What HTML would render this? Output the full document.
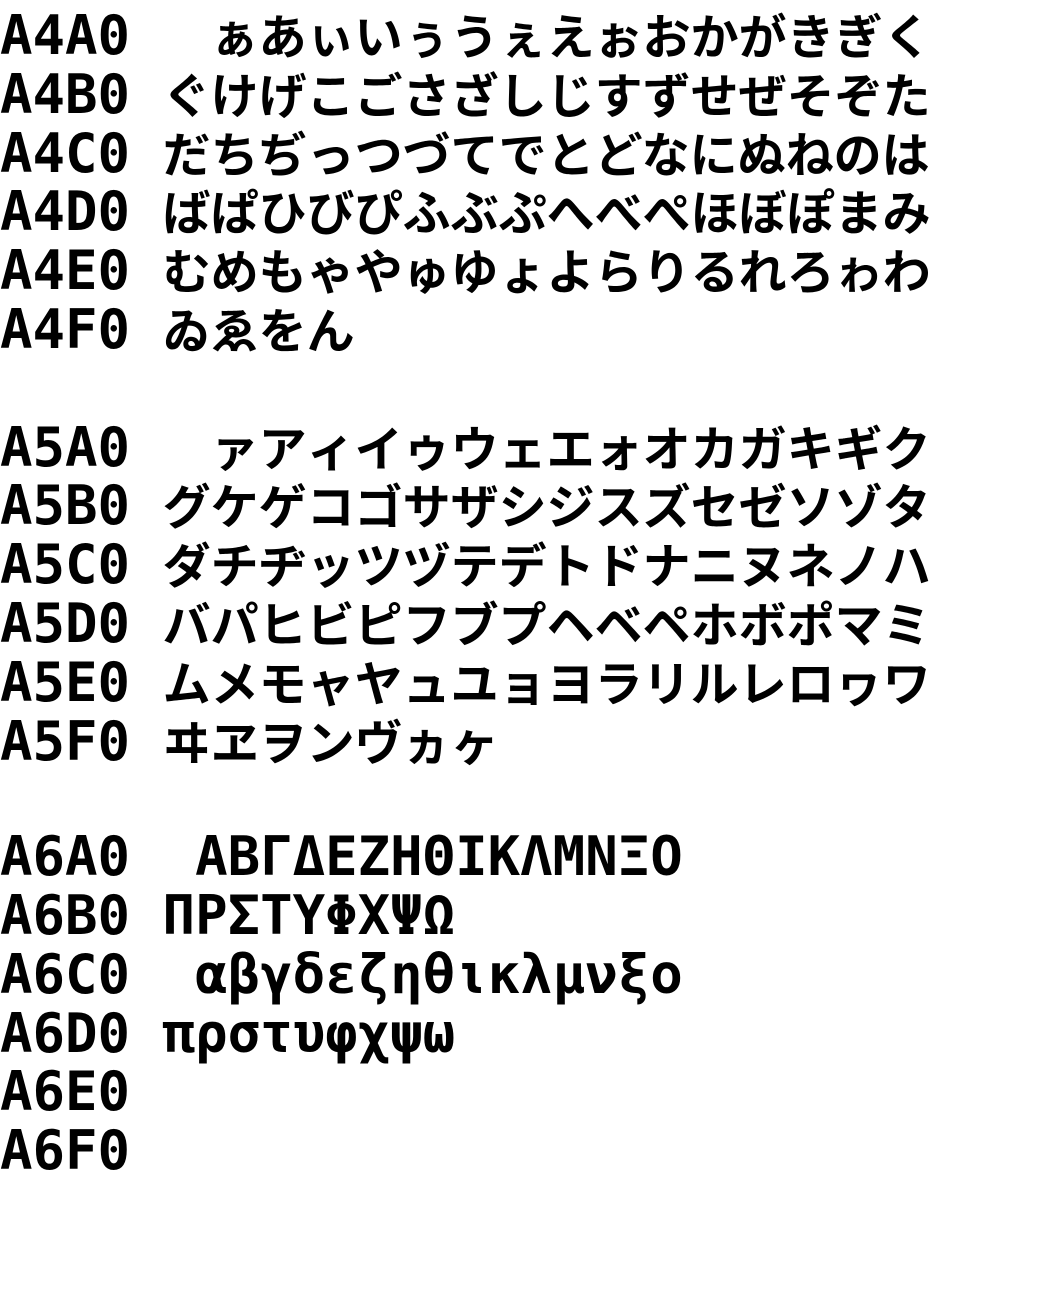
<!DOCTYPE html>
<html><head><meta charset="utf-8"><style>
html,body{margin:0;padding:0;background:#fff;width:1063px;height:1296px;overflow:hidden}
.l{position:absolute;left:0;height:59px;line-height:59px;white-space:pre;font-family:"DejaVu Sans Mono","Liberation Mono",monospace;font-weight:bold;font-size:54px;color:#000}
.k{font-family:"Noto Sans CJK JP","DejaVu Sans Mono",sans-serif;font-size:48px;font-weight:bold;display:inline-block;width:768px;letter-spacing:0}
.b{display:inline-block;width:48px}
</style></head><body>
<div class="l" style="top:4px">A4A0 <span class="k"><span class="b"></span>ぁあぃいぅうぇえぉおかがきぎく</span></div>
<div class="l" style="top:62.8px">A4B0 <span class="k">ぐけげこごさざしじすずせぜそぞた</span></div>
<div class="l" style="top:121.6px">A4C0 <span class="k">だちぢっつづてでとどなにぬねのは</span></div>
<div class="l" style="top:180.4px">A4D0 <span class="k">ばぱひびぴふぶぷへべぺほぼぽまみ</span></div>
<div class="l" style="top:239.2px">A4E0 <span class="k">むめもゃやゅゆょよらりるれろゎわ</span></div>
<div class="l" style="top:298px">A4F0 <span class="k">ゐゑをん</span></div>
<div class="l" style="top:415.6px">A5A0 <span class="k"><span class="b"></span>ァアィイゥウェエォオカガキギク</span></div>
<div class="l" style="top:474.4px">A5B0 <span class="k">グケゲコゴサザシジスズセゼソゾタ</span></div>
<div class="l" style="top:533.2px">A5C0 <span class="k">ダチヂッツヅテデトドナニヌネノハ</span></div>
<div class="l" style="top:592px">A5D0 <span class="k">バパヒビピフブプヘベペホボポマミ</span></div>
<div class="l" style="top:650.8px">A5E0 <span class="k">ムメモャヤュユョヨラリルレロヮワ</span></div>
<div class="l" style="top:709.6px">A5F0 <span class="k">ヰヱヲンヴヵヶ</span></div>
<div class="l" style="top:827.2px">A6A0  ΑΒΓΔΕΖΗΘΙΚΛΜΝΞΟ</div>
<div class="l" style="top:886px">A6B0 ΠΡΣΤΥΦΧΨΩ</div>
<div class="l" style="top:944.8px">A6C0  αβγδεζηθικλμνξο</div>
<div class="l" style="top:1003.6px">A6D0 πρστυφχψω</div>
<div class="l" style="top:1062.4px">A6E0</div>
<div class="l" style="top:1121.2px">A6F0</div>
</body></html>
